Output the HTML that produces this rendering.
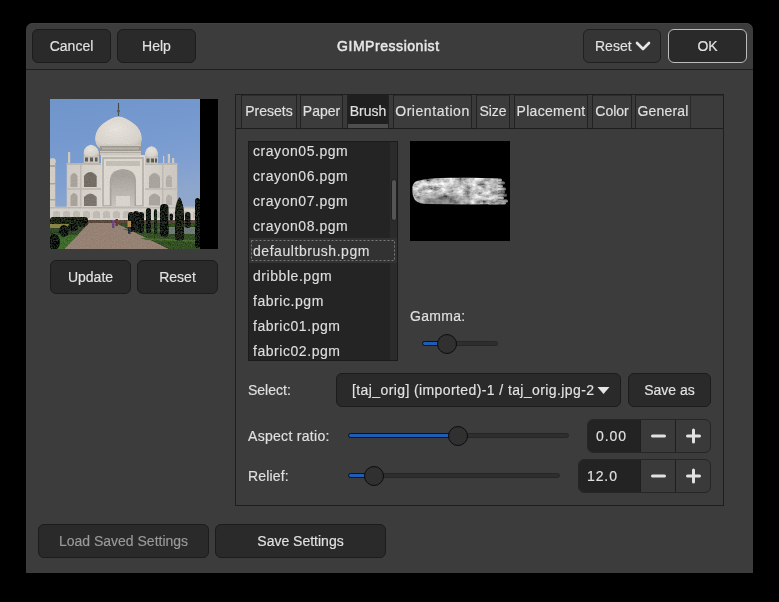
<!DOCTYPE html>
<html><head><meta charset="utf-8">
<style>
*{margin:0;padding:0;box-sizing:border-box}
html,body{width:779px;height:602px;background:#000;overflow:hidden}
body{position:relative;-webkit-font-smoothing:antialiased;font-family:"Liberation Sans",sans-serif;font-size:14px;color:#e0e0e0}
.a{position:absolute}
.t,.btn,.tab,.li{will-change:transform;-webkit-text-stroke:0.15px currentColor}
.dlg{left:26px;top:23px;width:727px;height:550px;background:#3c3c3c;border-radius:7px 7px 0 0;box-shadow:inset 0 1px 0 #424242}
.sep{left:26px;top:69px;width:727px;height:1px;background:#1f1f1f}
.btn{position:absolute;background:#2a2a2a;border:1px solid #1c1c1c;border-radius:6px;height:34px;line-height:32px;text-align:center;color:#e2e2e2}
.t{position:absolute;line-height:16px;white-space:nowrap}
.nb{left:235px;top:94px;width:489px;height:412px;border:1px solid #1e1e1e}
.tabline{left:236px;top:128px;width:487px;height:1px;background:#1e1e1e}
.tab{position:absolute;top:95px;height:33px;line-height:32px;text-align:center;color:#e0e0e0}
.act{background:#1f1f1f;border-bottom:4px solid #4e4e4e;line-height:32px}
.gap{position:absolute;top:95px;height:34px;width:6px;border-left:1px solid #222;border-right:1px solid #222;border-bottom:1px solid #1a1a1a;background:#3a3a3a}
.list{left:248px;top:141px;width:150px;height:220px;background:#242424;border:1px solid #1b1b1b;overflow:hidden}
.li{position:absolute;left:4px;height:25px;line-height:16px;letter-spacing:0.55px;color:#dedede;white-space:nowrap}
.track{position:absolute;height:5px;border-radius:3px;background:#2e2e2e;border:1px solid #262626}
.fill{position:absolute;height:5px;border-radius:3px;background:#1d5db6;border:1px solid #121212}
.knob{position:absolute;width:20px;height:20px;border-radius:50%;background:#303030;border:1.5px solid #0c0c0c}
.spin{position:absolute;height:34px;border:1px solid #262626;border-radius:6px;overflow:hidden;background:#3a3a3a}
.spin .e{position:absolute;left:0;top:0;bottom:0;background:#232323}
.spin .d{position:absolute;top:0;bottom:0;width:1px;background:#1e1e1e}
</style></head><body>
<div class="a dlg"></div>
<div class="a sep"></div>

<div class="btn" style="left:32px;top:29px;width:79px">Cancel</div>
<div class="btn" style="left:117px;top:29px;width:79px">Help</div>
<div class="t" style="left:337px;top:38px;color:#e8e8e8;font-size:14px;letter-spacing:0.55px;-webkit-text-stroke:0.5px currentColor">GIMPressionist</div>
<div class="btn" style="left:583px;top:29px;width:78px;text-align:left;padding-left:11px;background:#353535;border-color:#202020">Reset</div>
<svg class="a" style="left:634px;top:39px" width="20" height="14" viewBox="0 0 20 14"><path d="M3 4 L9 10 L15 4" fill="none" stroke="#e6e6e6" stroke-width="2.6" stroke-linecap="round" stroke-linejoin="round"/></svg>
<div class="btn" style="left:668px;top:29px;width:79px;border-color:#bcbcbc">OK</div>

<!-- preview -->
<svg class="a" style="left:50px;top:99px" width="168" height="150" viewBox="0 0 168 150">
<defs>
<linearGradient id="sky" x1="0" y1="0" x2="0.2" y2="1"><stop offset="0" stop-color="#6f95ca"/><stop offset="0.4" stop-color="#789bd0"/><stop offset="0.6" stop-color="#82a0d0"/><stop offset="0.75" stop-color="#8da6cc"/><stop offset="1" stop-color="#96a9c6"/></linearGradient>
<radialGradient id="dome" cx="0.45" cy="0.4" r="0.75"><stop offset="0" stop-color="#e6e2dc"/><stop offset="0.75" stop-color="#d6d2ca"/><stop offset="1" stop-color="#b8b4ac"/></radialGradient>
<linearGradient id="wall" x1="0" y1="0" x2="1" y2="0"><stop offset="0" stop-color="#cfcac3"/><stop offset="0.5" stop-color="#e0dcd4"/><stop offset="1" stop-color="#cbc7c0"/></linearGradient>
<filter id="bl" x="0" y="0" width="100%" height="100%" filterUnits="userSpaceOnUse"><feGaussianBlur in="SourceGraphic" stdDeviation="0.5" result="b"/>
<feTurbulence type="fractalNoise" baseFrequency="0.7" numOctaves="2" seed="5" result="n"/>
<feColorMatrix in="n" type="matrix" values="1 0 0 0 0  1 0 0 0 0  1 0 0 0 0  0 0 0 0 1" result="g"/>
<feComposite in="g" in2="b" operator="arithmetic" k1="0" k2="0.1" k3="1" k4="-0.05" result="c"/><feComposite in="c" in2="SourceAlpha" operator="in"/></filter>
</defs>
<rect x="0" y="0" width="150" height="150" fill="url(#sky)"/>
<g filter="url(#bl)">
<!-- left minaret -->
<rect x="0" y="62" width="5.5" height="47" fill="#d2cec6"/>
<ellipse cx="2.5" cy="62" rx="3.5" ry="3" fill="#cfcac2"/>
<rect x="0" y="66" width="6" height="2" fill="#a9a59e"/>
<rect x="0" y="84" width="6" height="1.5" fill="#a9a59e"/>
<rect x="0" y="100" width="6" height="1.5" fill="#a9a59e"/>
<!-- wings -->
<rect x="16.5" y="64" width="111" height="45" fill="url(#wall)"/>
<rect x="18" y="53" width="2.5" height="12" fill="#cdc8c0"/>
<rect x="113" y="57" width="1.5" height="8" fill="#cdc8c0"/>
<rect x="117.5" y="55" width="2.5" height="10" fill="#cdc8c0"/>
<rect x="122" y="59" width="2.5" height="6" fill="#cdc8c0"/>
<rect x="16.5" y="64" width="111" height="2" fill="#bcb7ae"/>
<rect x="16.5" y="89" width="111" height="2" fill="#c2bdb5"/>
<!-- central portal -->
<rect x="51" y="56" width="44" height="53" fill="#dcd8d0"/>
<rect x="53" y="59" width="40" height="48" fill="none" stroke="#aea9a1" stroke-width="1.5"/>
<rect x="56" y="62" width="34" height="5" fill="#c2bdb5"/>
<defs><linearGradient id="arch" x1="0" y1="0" x2="0" y2="1"><stop offset="0" stop-color="#a49f98"/><stop offset="1" stop-color="#c8c4bc"/></linearGradient></defs>
<path d="M59.8 107 L59.8 82 Q60 71 73 70 Q86 71 86 82 L86 107 Z" fill="#a8a39c"/>
<path d="M61.5 107 L61.5 86 Q62 76 73 74 Q84 76 84.5 86 L84.5 107 Z" fill="url(#arch)"/>
<rect x="66" y="97" width="14" height="10" fill="#d8d4cc"/>
<!-- wing arches -->
<path d="M20.5 88 L20.5 77 Q24 71 27.5 77 L27.5 88 Z" fill="#a8a39b"/>
<path d="M34 88 L34 77 Q40.3 69 46.7 77 L46.7 88 Z" fill="#736d66"/>
<path d="M20.5 107 L20.5 97 Q24 91 27.5 97 L27.5 107 Z" fill="#a8a39b"/>
<path d="M34 107 L34 98 Q40.3 91 46.7 98 L46.7 107 Z" fill="#7a746d"/>
<path d="M99 89 L99 78 Q104.5 70 110 78 L110 89 Z" fill="#a9a49d"/>
<path d="M116 88 L116 79 Q119 73 122 79 L122 88 Z" fill="#b3aea7"/>
<path d="M99 106.5 L99 98 Q104.5 91 110 98 L110 106.5 Z" fill="#a9a49d"/>
<path d="M116 106 L116 98 Q119 93 122 98 L122 106 Z" fill="#b3aea7"/>
<rect x="30" y="66" width="1.5" height="42" fill="#bdb8b0"/>
<rect x="112" y="66" width="1.5" height="42" fill="#bdb8b0"/>
<!-- main dome -->
<path d="M62 19 Q68.5 15.5 75 19 C86 24 92 31 92 40 C92 44.5 90 47.5 88 49 L49 49 C47 47.5 45 44.5 45 40 C45 31 51 24 62 19 Z" fill="url(#dome)"/>
<rect x="67.8" y="4" width="1.4" height="13" fill="#4a4a4a"/>
<ellipse cx="68.5" cy="12" rx="1.4" ry="1.8" fill="#55524c"/>
<!-- drum -->
<rect x="50" y="45.5" width="41" height="11" fill="#cdc8c0"/>
<rect x="50" y="47" width="41" height="5" fill="#9d988f"/>
<rect x="52" y="48.5" width="37" height="2" fill="#b5b0a8"/>
<rect x="50" y="53" width="41" height="1" fill="#b0aba3"/>
<!-- small domes -->
<path d="M41 45.5 C46 46.5 49 50 49 54 L49 57 L33.5 57 L33.5 54 C33.5 50 36 46.5 41 45.5 Z" fill="url(#dome)"/>
<rect x="33.5" y="57" width="15.5" height="7" fill="#c8c3bb"/>
<rect x="35" y="58.5" width="3" height="4" fill="#5f5b56"/><rect x="40" y="58.5" width="3" height="4" fill="#5f5b56"/><rect x="45" y="58.5" width="2.5" height="4" fill="#5f5b56"/>
<path d="M101.5 47 C106 48 108 51 108 55 L108 58 L95 58 L95 55 C95 51 97 48 101.5 47 Z" fill="url(#dome)"/>
<rect x="95" y="58" width="13" height="7" fill="#c8c3bb"/>
<rect x="96.5" y="59.5" width="3" height="4" fill="#5f5b56"/><rect x="101" y="59.5" width="3" height="4" fill="#5f5b56"/><rect x="105" y="59.5" width="2" height="4" fill="#5f5b56"/>
<!-- plinth -->
<rect x="0" y="107.5" width="147" height="14" fill="#d6d2cb"/>
<rect x="0" y="108" width="147" height="1.5" fill="#bcb7af"/>
<path d="M3 119 L3 113.5 Q6.5 110 10 113.5 L10 119 Z" fill="#bfbab2"/><path d="M13 119 L13 113.5 Q16.5 110 20 113.5 L20 119 Z" fill="#bfbab2"/><path d="M23 119 L23 113.5 Q26.5 110 30 113.5 L30 119 Z" fill="#bfbab2"/><path d="M33 119 L33 113.5 Q36.5 110 40 113.5 L40 119 Z" fill="#bfbab2"/><path d="M43 119 L43 113.5 Q46.5 110 50 113.5 L50 119 Z" fill="#bfbab2"/><path d="M53 119 L53 113.5 Q56.5 110 60 113.5 L60 119 Z" fill="#bfbab2"/><path d="M63 119 L63 113.5 Q66.5 110 70 113.5 L70 119 Z" fill="#bfbab2"/><path d="M73 119 L73 113.5 Q76.5 110 80 113.5 L80 119 Z" fill="#bfbab2"/><path d="M83 119 L83 113.5 Q86.5 110 90 113.5 L90 119 Z" fill="#bfbab2"/><path d="M93 119 L93 113.5 Q96.5 110 100 113.5 L100 119 Z" fill="#bfbab2"/><path d="M103 119 L103 113.5 Q106.5 110 110 113.5 L110 119 Z" fill="#bfbab2"/><path d="M113 119 L113 113.5 Q116.5 110 120 113.5 L120 119 Z" fill="#bfbab2"/><path d="M123 119 L123 113.5 Q126.5 110 130 113.5 L130 119 Z" fill="#bfbab2"/><path d="M133 119 L133 113.5 Q136.5 110 140 113.5 L140 119 Z" fill="#bfbab2"/><path d="M143 119 L143 113.5 Q146.5 110 150 113.5 L150 119 Z" fill="#bfbab2"/>
<rect x="0" y="121" width="147" height="3" fill="#8c6a58"/>
<!-- ground -->
<rect x="0" y="122" width="150" height="28" fill="#33482a"/>
<rect x="0" y="121" width="150" height="4" fill="#5a4a3c"/>
<path d="M14 150 L39 124 L66 124 L119 150 Z" fill="#968274"/>
<path d="M66 124 L150 124 L150 150 L119 150 Z" fill="#344f26"/>
<path d="M72 130 L150 131 L150 133 L78 132 Z" fill="#4f6e36"/>
<path d="M90 139 L150 141 L150 143 L96 141 Z" fill="#4a6a32"/>
<rect x="119" y="128" width="26" height="7" fill="#6f7a78"/>
<path d="M0 136 L28 136 L14 150 L0 150 Z" fill="#3d6a2a"/>
<!-- hedges -->
<rect x="0" y="118" width="38" height="8" rx="3" fill="#1c2616"/>
<rect x="0" y="125" width="22" height="4" fill="#8c8444"/>
<ellipse cx="4" cy="143" rx="6" ry="8" fill="#0f140e"/>
<ellipse cx="14" cy="132" rx="5" ry="6" fill="#141c12"/>
<ellipse cx="23" cy="128" rx="5" ry="4.5" fill="#161e12"/>
<ellipse cx="32" cy="124" rx="6" ry="4" fill="#1a2216"/>
<!-- cypress trees -->
<rect x="78" y="113" width="6" height="20" rx="3" fill="#161b16"/>
<rect x="83" y="112" width="6" height="21" rx="3" fill="#1a1f1a"/>
<rect x="88" y="113" width="6" height="21" rx="3" fill="#161b16"/>
<rect x="96" y="109" width="5" height="25" rx="2.5" fill="#171c17"/>
<rect x="104" y="110" width="3" height="25" rx="1.5" fill="#1e2a1c"/>
<rect x="110" y="105" width="8.5" height="33" rx="4" fill="#151a15"/>
<path d="M129.5 98 C131 99 134 106 134 115 L134 140 C134 142 125 142 125 140 L125 115 C125 106 128 99 129.5 98 Z" fill="#1c2419"/>
<rect x="135" y="113" width="5.5" height="16" rx="2.5" fill="#1a1f1a"/>
<rect x="119.5" y="114.5" width="3.5" height="7" rx="1.5" fill="#1a1f1a"/>
<rect x="145" y="99" width="5" height="50" rx="2" fill="#111511"/>
<!-- people -->
<rect x="77.5" y="122" width="3.5" height="6" fill="#b08a50"/>
<rect x="78" y="128" width="2.5" height="7" fill="#2a3040"/>
<rect x="62" y="121" width="2.5" height="8" fill="#6a4a80"/>
<rect x="65.5" y="120" width="2.5" height="7" fill="#7a3030"/>
</g>
<rect x="150" y="0" width="18" height="150" fill="#000"/>
</svg>
<div class="btn" style="left:50px;top:260px;width:81px">Update</div>
<div class="btn" style="left:137px;top:260px;width:81px">Reset</div>

<!-- notebook -->
<div class="a nb"></div>
<div class="a tabline"></div>
<div class="a" style="left:236px;top:95px;width:487px;height:1px;background:#2c2c2c"></div>
<div class="gap" style="left:236px;width:6px;border-left:none"></div>
<div class="tab" style="left:242px;width:54px">Presets</div>
<div class="gap" style="left:296px;width:5px"></div>
<div class="tab" style="left:301px;width:41px">Paper</div>
<div class="gap" style="left:342px;width:6px"></div>
<div class="tab act" style="left:348px;width:40px">Brush</div>
<div class="gap" style="left:388px;width:6px"></div>
<div class="tab" style="left:394px;width:77px;letter-spacing:0.55px">Orientation</div>
<div class="gap" style="left:471px;width:6px"></div>
<div class="tab" style="left:477px;width:32px">Size</div>
<div class="gap" style="left:509px;width:6px"></div>
<div class="tab" style="left:515px;width:72px;letter-spacing:0.3px">Placement</div>
<div class="gap" style="left:587px;width:6px"></div>
<div class="tab" style="left:593px;width:38px">Color</div>
<div class="gap" style="left:631px;width:5px"></div>
<div class="tab" style="left:636px;width:54px;letter-spacing:0.2px">General</div>
<div class="a" style="left:690px;top:95px;width:1px;height:33px;background:#2a2a2a"></div>

<div class="a list">
<div class="a" style="left:141px;top:0;width:7px;height:218px;background:#2b2b2b"></div>
<div class="a" style="left:0;top:96px;width:148px;height:25px;background:#323232"></div>
<svg class="a" style="left:2px;top:98px" width="145" height="22"><rect x="0.5" y="0.5" width="143" height="20" fill="none" stroke="#7a7a7a" stroke-width="1" stroke-dasharray="2 2"/></svg>
<div class="a" style="left:142px;top:37px;width:6px;height:42px;background:#555;border:1px solid #202020;border-radius:3px"></div>
<div class="li" style="top:1px">crayon05.pgm</div>
<div class="li" style="top:26px">crayon06.pgm</div>
<div class="li" style="top:51px">crayon07.pgm</div>
<div class="li" style="top:76px">crayon08.pgm</div>
<div class="li" style="top:101px">defaultbrush.pgm</div>
<div class="li" style="top:126px">dribble.pgm</div>
<div class="li" style="top:151px">fabric.pgm</div>
<div class="li" style="top:176px">fabric01.pgm</div>
<div class="li" style="top:201px">fabric02.pgm</div>
</div>

<svg class="a" style="left:410px;top:141px" width="100" height="100" viewBox="0 0 100 100">
<defs>
<filter id="tex" x="0" y="0" width="100%" height="100%">
<feTurbulence type="fractalNoise" baseFrequency="0.13 0.22" numOctaves="5" seed="3" result="n"/>
<feColorMatrix in="n" type="matrix" values="1.4 0 0 0 -0.12  1.4 0 0 0 -0.12  1.4 0 0 0 -0.12  0 0 0 0 1" result="m"/>
<feComposite in="m" in2="SourceGraphic" operator="arithmetic" k1="1" k2="0" k3="0" k4="0" result="c"/>
<feGaussianBlur in="c" stdDeviation="0.7"/>
</filter>
<linearGradient id="fade" gradientUnits="userSpaceOnUse" x1="0" y1="0" x2="100" y2="0"><stop offset="0" stop-color="#fff"/><stop offset="0.8" stop-color="#f4f4f4"/><stop offset="0.9" stop-color="#d8d8d8"/><stop offset="1" stop-color="#777"/></linearGradient>
<radialGradient id="dk" cx="0.3" cy="0.85" r="0.35"><stop offset="0" stop-color="#000" stop-opacity="0.45"/><stop offset="1" stop-color="#000" stop-opacity="0"/></radialGradient>
</defs>
<rect width="100" height="100" fill="#000"/>
<g filter="url(#tex)" fill="url(#fade)">
<path d="M7 40 C4 41 2 44 2.5 48 C2 52 3 56 5 59 C8 62 12 63 18 63 L60 63.5 L88 63 L88 37.5 C70 36.5 50 36.5 30 37 C20 37.5 12 38.5 7 40 Z"/>
<rect x="78" y="37.5" width="14" height="3" rx="1.5"/>
<rect x="78" y="40.5" width="17" height="3" rx="1.5"/>
<rect x="78" y="43.5" width="15" height="3" rx="1.5"/>
<rect x="78" y="46.5" width="18" height="3" rx="1.5"/>
<rect x="78" y="49.5" width="17" height="3" rx="1.5"/>
<rect x="78" y="52.5" width="19" height="3" rx="1.5"/>
<rect x="78" y="55.5" width="16" height="3" rx="1.5"/>
<rect x="78" y="58.5" width="20" height="3" rx="1.5"/>
<rect x="78" y="61" width="18" height="2.5" rx="1.2"/>
</g>
<rect x="0" y="35" width="100" height="30" fill="url(#dk)"/>
</svg>

<div class="t" style="left:410px;top:308px;letter-spacing:0.3px">Gamma:</div>

<div class="t" style="left:248px;top:382px">Select:</div>
<div class="btn" style="left:336px;top:373px;width:285px;text-align:left;padding-left:15px;letter-spacing:0.4px">[taj_orig] (imported)-1 / taj_orig.jpg-2</div>
<div class="btn" style="left:628px;top:373px;width:83px">Save as</div>

<div class="t" style="left:248px;top:428px;letter-spacing:0.3px">Aspect ratio:</div>
<div class="t" style="left:248px;top:468px;letter-spacing:0.15px">Relief:</div>


<!-- gamma slider -->
<div class="track" style="left:422px;top:341px;width:76px"></div>
<div class="fill" style="left:422px;top:341px;width:30px"></div>
<div class="knob" style="left:437px;top:334px"></div>
<!-- aspect slider -->
<div class="track" style="left:348px;top:433px;width:221px"></div>
<div class="fill" style="left:348px;top:433px;width:115px"></div>
<div class="knob" style="left:448px;top:426px"></div>
<!-- relief slider -->
<div class="track" style="left:348px;top:473px;width:212px"></div>
<div class="fill" style="left:348px;top:473px;width:30px"></div>
<div class="knob" style="left:364px;top:466px"></div>
<!-- spins -->
<div class="spin" style="left:587px;top:419px;width:124px"><div class="e" style="width:52px"></div><div class="d" style="left:52px"></div><div class="d" style="left:87px"></div>
<div class="t" style="left:8px;top:8px;letter-spacing:0.9px">0.00</div></div>
<div class="spin" style="left:578px;top:459px;width:133px"><div class="e" style="width:61px"></div><div class="d" style="left:61px"></div><div class="d" style="left:96px"></div>
<div class="t" style="left:8px;top:8px;letter-spacing:0.9px">12.0</div></div>
<svg class="a" style="left:640px;top:419px" width="71" height="74" viewBox="0 0 71 74"><g stroke="#e2e2e2" stroke-width="3" stroke-linecap="round" fill="none">
<path d="M12.5 17 H24.5"/><path d="M47.5 17 H59.5 M53.5 11 V23"/>
<path d="M12.5 57 H24.5"/><path d="M47.5 57 H59.5 M53.5 51 V63"/></g></svg>
<svg class="a" style="left:597px;top:385px" width="14" height="10"><path d="M0.5 2 L12.5 2 L6.5 9 Z" fill="#e6e6e6"/></svg>

<div class="btn" style="left:38px;top:524px;width:171px;color:#9a9a9a">Load Saved Settings</div>
<div class="btn" style="left:215px;top:524px;width:171px">Save Settings</div>
</body></html>
